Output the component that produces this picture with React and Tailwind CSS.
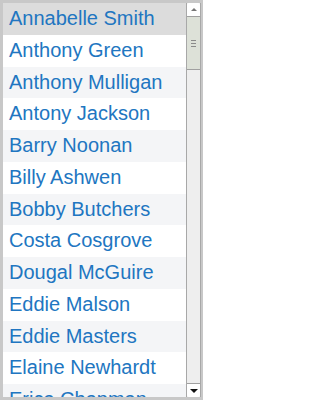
import React from "react";

const names = [
  "Annabelle Smith",
  "Anthony Green",
  "Anthony Mulligan",
  "Antony Jackson",
  "Barry Noonan",
  "Billy Ashwen",
  "Bobby Butchers",
  "Costa Cosgrove",
  "Dougal McGuire",
  "Eddie Malson",
  "Eddie Masters",
  "Elaine Newhardt",
  "Erica Chapman",
  "Frank Smith",
];

export default function App() {
  return (
    <div className="w-[203px] h-[400px] flex overflow-hidden bg-white border-[#c8c8c8] border-t-[3px] border-l-[3px] border-b-[3px] border-r-[2px]">
      <ul
        className="flex-1 overflow-hidden"
        style={{ fontFamily: '"Liberation Sans", Arial, sans-serif' }}
      >
        {names.map((n, i) => (
          <li
            key={n}
            className={
              "h-[31.75px] leading-[31.75px] pl-[6px] text-[20px] text-[#2176c1] whitespace-nowrap " +
              (i === 0 ? "bg-[#dcdcdc]" : i % 2 === 0 ? "bg-[#f4f5f7]" : "bg-white")
            }
          >
            {n}
          </li>
        ))}
      </ul>
      <div className="w-[15px] flex flex-col bg-[#eeeeee] border-x border-[#a8a8a8]">
        <div className="h-[14px] bg-white border-b border-[#a0a0a0] rounded-t-[2px] flex items-center justify-center">
          <div className="w-0 h-0 border-l-[3px] border-r-[3px] border-b-[3px] border-l-transparent border-r-transparent border-b-[#777]" />
        </div>
        <div className="h-[53px] bg-[#dde1d8] border-b border-[#a0a0a0] flex flex-col items-center justify-center gap-[2px]">
          <div className="w-[5px] h-px bg-[#8a8a8a]" />
          <div className="w-[5px] h-px bg-[#8a8a8a]" />
          <div className="w-[5px] h-px bg-[#8a8a8a]" />
        </div>
        <div className="flex-1" />
        <div className="h-[14px] bg-white border-t border-[#a0a0a0] rounded-b-[2px] flex items-center justify-center">
          <div className="w-0 h-0 border-l-[4px] border-r-[4px] border-t-[4px] border-l-transparent border-r-transparent border-t-[#111]" />
        </div>
      </div>
    </div>
  );
}
